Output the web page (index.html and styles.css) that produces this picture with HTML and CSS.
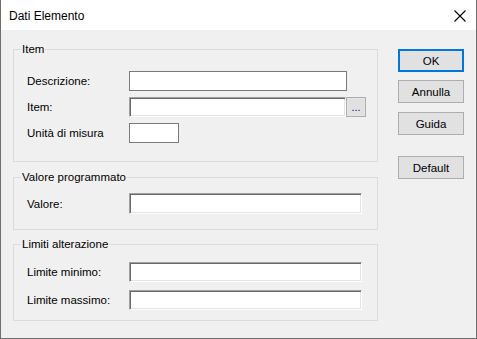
FILE: index.html
```html
<!DOCTYPE html>
<html>
<head>
<meta charset="utf-8">
<link rel="stylesheet" href="styles.css">
</head>
<body>
<div class="window">
  <div class="titlebar">
    <span class="title">Dati Elemento</span>
    <svg class="close" width="14" height="14" viewBox="0 0 14 14"><path d="M1.5 1.5 L12.5 12.5 M12.5 1.5 L1.5 12.5" stroke="#000" stroke-width="1.1" fill="none"/></svg>
  </div>
  <div class="content">
    <div class="groups">
      <div class="group g1">
        <div class="legend"><span>Item</span></div>
        <div class="rows">
          <div class="row"><span class="label">Descrizione:</span><span class="input flat w-desc"></span></div>
          <div class="row"><span class="label">Item:</span><span class="input sunken w-item"></span><span class="browse">...</span></div>
          <div class="row"><span class="label">Unità di misura</span><span class="input flat w-unit"></span></div>
        </div>
      </div>
      <div class="group g2">
        <div class="legend"><span>Valore programmato</span></div>
        <div class="rows">
          <div class="row tall"><span class="label">Valore:</span><span class="input sunken w-wide"></span></div>
        </div>
      </div>
      <div class="group g3">
        <div class="legend"><span>Limiti alterazione</span></div>
        <div class="rows">
          <div class="row"><span class="label">Limite minimo:</span><span class="input sunken w-wide"></span></div>
          <div class="row"><span class="label">Limite massimo:</span><span class="input sunken w-wide"></span></div>
        </div>
      </div>
    </div>
    <div class="buttons">
      <div class="btn default-btn">OK</div>
      <div class="btn b2">Annulla</div>
      <div class="btn b3">Guida</div>
      <div class="btn b4">Default</div>
    </div>
  </div>
</div>
</body>
</html>
```

FILE: styles.css
```css
html, body {
  margin: 0;
  padding: 0;
  background: #f0f0f0;
}
body {
  font-family: "Liberation Sans", Arial, sans-serif;
  font-size: 11.5px;
  color: #000;
}
.window {
  width: 477px;
  height: 339px;
  box-sizing: border-box;
  border: 1px solid #6e6e6e;
  border-top: none;
  background: #f0f0f0;
  display: flex;
  flex-direction: column;
}
.titlebar {
  height: 30px;
  flex: none;
  background: #fff;
  display: flex;
  align-items: center;
  justify-content: space-between;
  padding: 0 8px 0 8px;
  box-sizing: border-box;
}
.title {
  font-size: 12px;
  padding-top: 1px;
}
.close {
  margin-right: 1px;
  margin-top: 1px;
}
.content {
  display: flex;
  padding-left: 12px;
}
.groups {
  width: 365px;
  display: flex;
  flex-direction: column;
}
.group {
  border: 1px solid #dcdcdc;
}
.g1 { margin-top: 19px; padding-bottom: 18px; }
.g2 { margin-top: 15px; padding-bottom: 15px; }
.g3 { margin-top: 14px; padding-bottom: 10px; }
.legend {
  height: 14px;
  line-height: 14px;
  margin-top: -8px;
  padding-left: 7px;
}
.legend span {
  background: #f0f0f0;
  padding: 0 1px;
}
.rows {
  display: flex;
  flex-direction: column;
}
.g1 .rows { margin-top: 15px; gap: 6px; }
.g2 .rows { margin-top: 9px; }
.g3 .rows { margin-top: 11px; gap: 8px; }
.row {
  display: flex;
  align-items: center;
  height: 20px;
}
.row.tall { height: 21px; }
.label {
  width: 115px;
  padding-left: 13px;
  box-sizing: border-box;
  flex: none;
}
.input {
  display: block;
  height: 100%;
  box-sizing: border-box;
  background: #fff;
}
.flat {
  border: 1px solid #7a7a7a;
}
.sunken {
  border-style: solid;
  border-width: 1px;
  border-color: #a0a0a0 #ffffff #ffffff #a0a0a0;
  box-shadow: inset 1px 1px 0 #696969, inset -1px -1px 0 #e3e3e3;
}
.w-desc { width: 218px; }
.w-item { width: 217px; }
.w-unit { width: 50px; }
.w-wide { width: 233px; }
.browse {
  width: 20px;
  height: 20px;
  box-sizing: border-box;
  border: 1px solid #adadad;
  background: #e1e1e1;
  box-shadow: inset 0 0 0 1px #e5e5e5;
  display: flex;
  align-items: flex-end;
  justify-content: center;
  line-height: 12px;
  padding-bottom: 3px;
  font-size: 11px;
  color: #300060;
}
.buttons {
  margin-left: 20px;
  margin-top: 19px;
  display: flex;
  flex-direction: column;
  width: 66px;
}
.btn {
  height: 23px;
  box-sizing: border-box;
  border: 1px solid #adadad;
  background: #e1e1e1;
  display: flex;
  align-items: center;
  justify-content: center;
}
.default-btn {
  border: 2px solid #0078d7;
}
.b2 { margin-top: 8px; }
.b3 { margin-top: 9px; }
.b4 { margin-top: 21px; }
```
